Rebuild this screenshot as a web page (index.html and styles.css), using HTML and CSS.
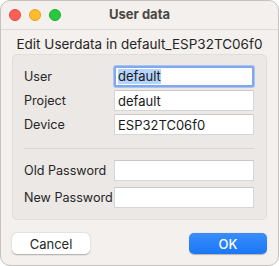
FILE: index.html
```html
<!DOCTYPE html>
<html>
<head>
  <meta charset="UTF-8" />
  <title>User data</title>
  <link rel="stylesheet" href="styles.css">
</head>
<body>

  <div class="finestra">
    <div class="titol">
      <div class="semafor">
        <span class="llum vermell"></span>
        <span class="llum groc"></span>
        <span class="llum verd"></span>
      </div>
      <div class="nom">User data</div>
    </div>

    <div class="capcalera">Edit Userdata in default_ESP32TC06f0</div>

    <div class="grup">
      <div class="fila">
        <label>User</label>
        <div class="camp focus"><span class="seleccio">default</span></div>
      </div>
      <div class="fila">
        <label>Project</label>
        <input class="camp" type="text" value="default">
      </div>
      <div class="fila">
        <label>Device</label>
        <input class="camp" type="text" value="ESP32TC06f0">
      </div>

      <div class="separador"></div>

      <div class="fila">
        <label>Old Password</label>
        <input class="camp" type="password">
      </div>
      <div class="fila darrera">
        <label>New Password</label>
        <input class="camp" type="password">
      </div>
    </div>

    <div class="botons">
      <button class="boto">Cancel</button>
      <button class="boto ok">OK</button>
    </div>
  </div>

</body>
</html>
```

FILE: styles.css
```css
body {
  margin: 0;
  background-color: #ffffff;
  font-family: Inter, "Liberation Sans", sans-serif;
  font-size: 13px;
  color: #262626;
}
.finestra {
  width: 279px;
  height: 266px;
  box-sizing: border-box;
  background-color: #f3f0ed;
  border: 1px solid #c4c1be;
  border-radius: 10px;
  overflow: hidden;
  display: flex;
  flex-direction: column;
}
.titol {
  height: 28px;
  border-bottom: 1px solid #dddad7;
  display: flex;
  align-items: center;
  position: relative;
}
.semafor {
  display: flex;
  gap: 8px;
  padding-left: 8px;
}
.llum {
  width: 12px;
  height: 12px;
  border-radius: 50%;
  display: block;
  box-sizing: border-box;
}
.vermell { background-color: #fe5f57; border: 0.5px solid #e14640; }
.groc { background-color: #febc2e; border: 0.5px solid #dfa023; }
.verd { background-color: #28c840; border: 0.5px solid #1daa2c; }
.nom {
  position: absolute;
  left: 0;
  right: 0;
  top: 5px;
  text-align: center;
  font-weight: bold;
  color: #4a4745;
}
.capcalera {
  text-align: center;
  margin-top: 5px;
  height: 18px;
  line-height: 18px;
  font-size: 13.5px;
}
.grup {
  margin: 1px 11px 0 11px;
  background-color: #ebe8e5;
  border: 1px solid #e0ddda;
  border-radius: 5px;
  padding: 11px 12px 11px 11px;
  display: flex;
  flex-direction: column;
  gap: 3px;
}
.fila {
  display: flex;
  align-items: center;
  height: 21px;
}
.fila label {
  width: 90px;
  flex-shrink: 0;
  white-space: nowrap;
  font-size: 12.6px;
}
.darrera {
  margin-top: 3px;
}
.camp {
  width: 140px;
  height: 21px;
  flex-shrink: 0;
  box-sizing: border-box;
  border: 1px solid #d6d6d6;
  border-top-color: #c8c8c8;
  background-color: #ffffff;
  font-family: Inter, "Liberation Sans", sans-serif;
  font-size: 13px;
  color: #1a1a1a;
  padding: 0 3px;
  margin: 0;
  outline: none;
}
.focus {
  display: flex;
  align-items: center;
  border: 2px solid #80a8ef;
  border-radius: 2px;
  box-shadow: 0 0 0 1px #a9c4f1;
  padding: 0 2px;
}
.seleccio {
  background-color: #b4d3fd;
  line-height: 15px;
}
.separador {
  height: 1px;
  background-color: #d8d5d2;
  margin: 10px 0 8px 0;
}
.botons {
  display: flex;
  justify-content: space-between;
  padding: 13px 11px 0 11px;
}
.boto {
  width: 78px;
  height: 21px;
  border: none;
  border-radius: 5px;
  background-color: #ffffff;
  box-shadow: 0 0.5px 1.5px rgba(0, 0, 0, 0.3);
  font-family: Inter, "Liberation Sans", sans-serif;
  font-size: 13px;
  color: #262626;
  padding: 0;
}
.ok {
  background: linear-gradient(#3a8dfc, #1a77f5);
  color: #ffffff;
  font-weight: 500;
  box-shadow: 0 0.5px 1px rgba(0, 0, 0, 0.25);
}
```
